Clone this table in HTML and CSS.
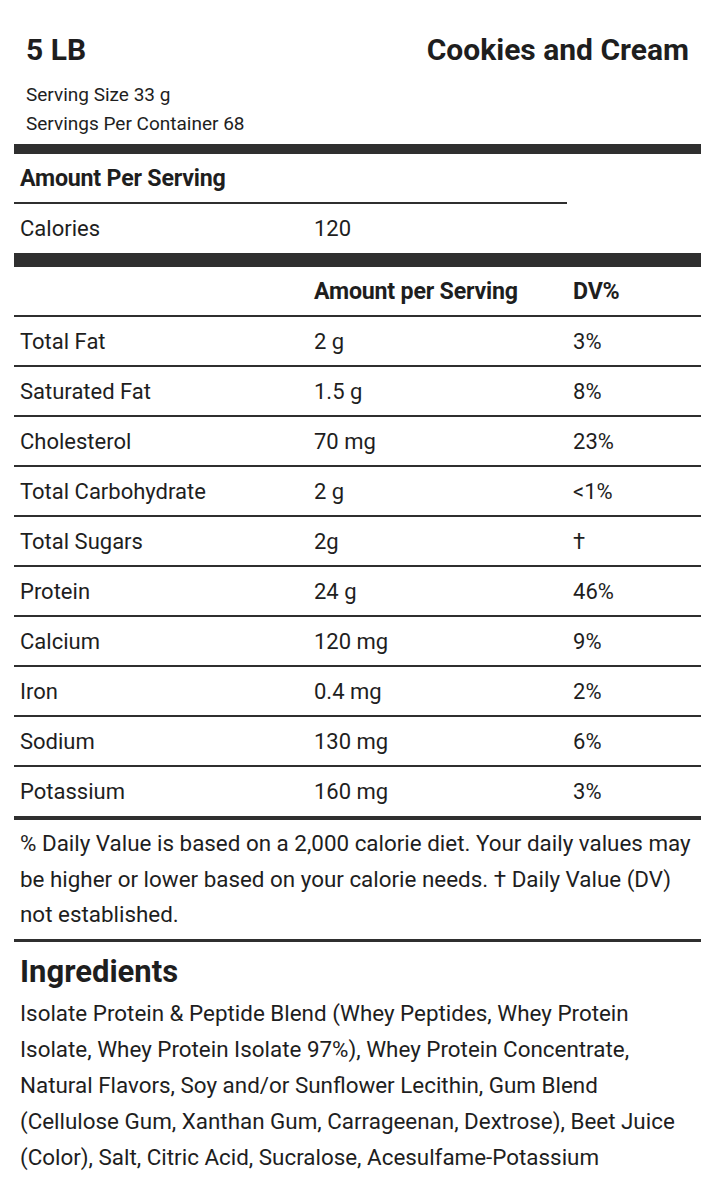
FILE: index.html
```html
<!DOCTYPE html>
<html lang="en">
<head>
<meta charset="utf-8">
<title>Nutrition Facts</title>
<link rel="stylesheet" href="styles.css">
</head>
<body>
<div class="label">
  <header class="top">
    <div class="title-row">
      <h1 class="size">5 LB</h1>
      <h2 class="flavor">Cookies and Cream</h2>
    </div>
    <p class="serving">Serving Size 33 g</p>
    <p class="serving">Servings Per Container 68</p>
  </header>

  <table class="facts">
    <colgroup>
      <col class="c1"><col class="c2"><col class="c3">
    </colgroup>
    <tbody>
      <tr class="aps-row">
        <td colspan="2" class="aps">Amount Per Serving</td>
        <td class="blank"></td>
      </tr>
      <tr class="cal-row">
        <td>Calories</td>
        <td>120</td>
        <td></td>
      </tr>
      <tr class="head-row">
        <td></td>
        <th>Amount per Serving</th>
        <th>DV%</th>
      </tr>
      <tr><td>Total Fat</td><td>2 g</td><td>3%</td></tr>
      <tr><td>Saturated Fat</td><td>1.5 g</td><td>8%</td></tr>
      <tr><td>Cholesterol</td><td>70 mg</td><td>23%</td></tr>
      <tr><td>Total Carbohydrate</td><td>2 g</td><td>&lt;1%</td></tr>
      <tr><td>Total Sugars</td><td>2g</td><td>†</td></tr>
      <tr><td>Protein</td><td>24 g</td><td>46%</td></tr>
      <tr><td>Calcium</td><td>120 mg</td><td>9%</td></tr>
      <tr><td>Iron</td><td>0.4 mg</td><td>2%</td></tr>
      <tr><td>Sodium</td><td>130 mg</td><td>6%</td></tr>
      <tr class="last-row"><td>Potassium</td><td>160 mg</td><td>3%</td></tr>
    </tbody>
  </table>

  <p class="note">% Daily Value is based on a 2,000 calorie diet. Your daily values may be higher or lower based on your calorie needs. † Daily Value (DV) not established.</p>

  <section class="ingredients">
    <h3>Ingredients</h3>
    <p>Isolate Protein &amp; Peptide Blend (Whey Peptides, Whey Protein Isolate, Whey Protein Isolate 97%), Whey Protein Concentrate, Natural Flavors, Soy and/or Sunflower Lecithin, Gum Blend (Cellulose Gum, Xanthan Gum, Carrageenan, Dextrose), Beet Juice (Color), Salt, Citric Acid, Sucralose, Acesulfame-Potassium</p>
  </section>
</div>
</body>
</html>
```

FILE: styles.css
```css
* { box-sizing: border-box; }

html, body {
  margin: 0;
  padding: 0;
  background: #ffffff;
}

body {
  font-family: Roboto, "Liberation Sans", sans-serif;
  color: #1e1e1e;
}

.label {
  width: 687px;
  margin-left: 14px;
}

.top {
  padding: 33px 12px 6px 12px;
}

.title-row {
  display: flex;
  justify-content: space-between;
  align-items: center;
  margin-bottom: 13px;
}

.size,
.flavor {
  margin: 0;
  font-size: 30px;
  line-height: 34px;
  font-weight: 700;
}

.serving {
  margin: 0;
  font-size: 19px;
  line-height: 29px;
}

.facts {
  width: 100%;
  border-collapse: collapse;
  table-layout: fixed;
  border-top: 10px solid #2f2f2f;
  font-size: 22px;
}

.c1 { width: 294px; }
.c2 { width: 259px; }
.c3 { width: 134px; }

.facts td,
.facts th {
  height: 50px;
  padding: 0 6px;
  text-align: left;
  vertical-align: middle;
  font-weight: 400;
}

.facts th,
.facts .aps {
  font-weight: 700;
  font-size: 23.2px;
  letter-spacing: -0.2px;
}

.facts tr {
  border-bottom: 2px solid #2f2f2f;
}

.facts .aps-row {
  border-bottom: none;
}

.facts .aps-row td {
  height: 54px;
}

.facts .aps {
  border-bottom: 2px solid #2f2f2f;
}

.facts .cal-row {
  border-bottom: 14px solid #2f2f2f;
}

.facts .cal-row td {
  height: 57px;
}

.facts .head-row td,
.facts .head-row th {
  height: 56px;
}

.facts .last-row {
  border-bottom: 4px solid #2f2f2f;
}

.facts .last-row td {
  height: 52px;
}

.note {
  margin: 0;
  padding: 6px 6px;
  font-size: 22.4px;
  line-height: 35.5px;
  border-bottom: 3px solid #2f2f2f;
}

.ingredients {
  padding: 12px 6px 0 6px;
}

.ingredients h3 {
  margin: 0;
  font-size: 31px;
  line-height: 36px;
  font-weight: 700;
}

.ingredients p {
  margin: 5px 0 0 0;
  font-size: 22.4px;
  line-height: 36px;
}
```
